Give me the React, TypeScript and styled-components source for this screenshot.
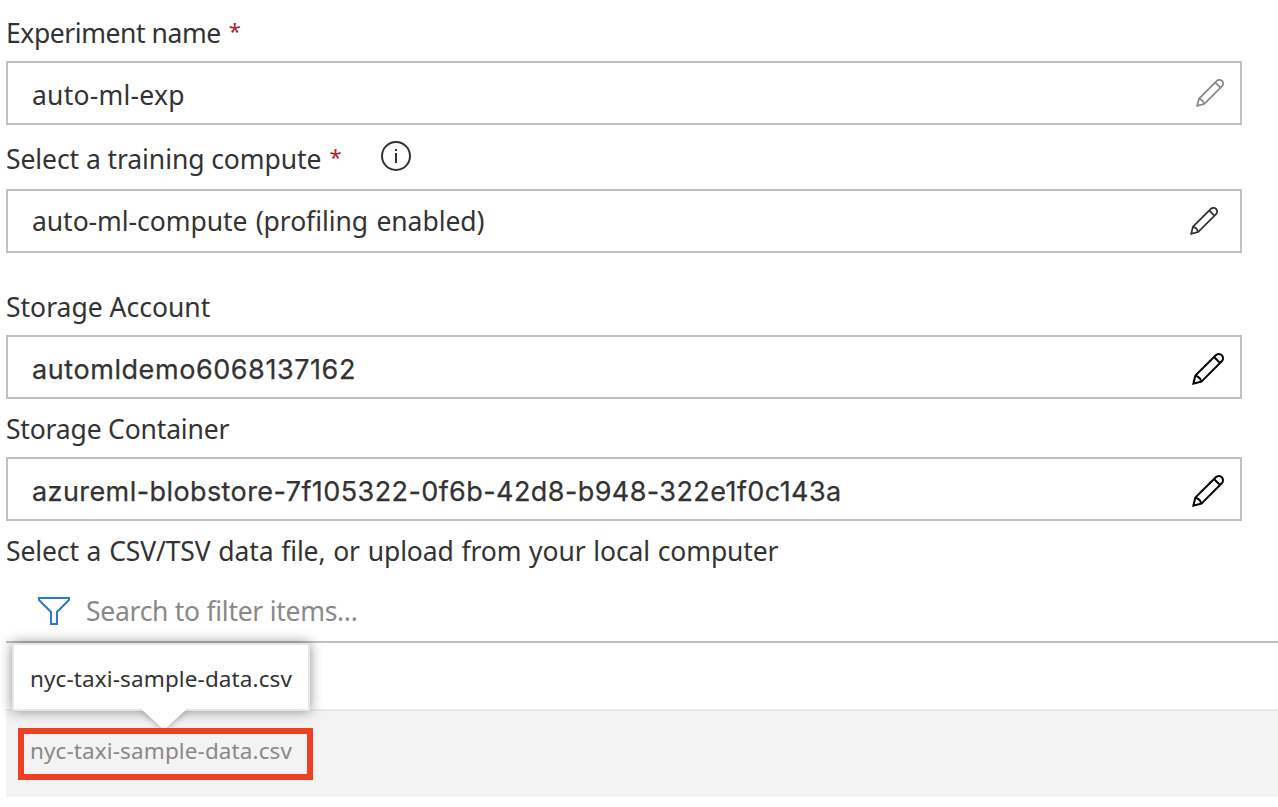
import React from 'react';
import styled, { createGlobalStyle } from 'styled-components';

const GlobalStyle = createGlobalStyle`
  * { box-sizing: border-box; }
  body {
    margin: 0;
    background: #fff;
    color: #333;
    font-family: 'Noto Sans', 'Open Sans', sans-serif;
    font-size: 26.5px;
    overflow: hidden;
  }
`;

const Page = styled.main`
  display: flex;
  flex-direction: column;
  height: 807px;
  padding-left: 6px;
`;

const Label = styled.label<{ $height: number; $drop?: number }>`
  display: flex;
  align-items: flex-end;
  height: ${p => p.$height}px;
  padding-bottom: ${p => 10 - (p.$drop ?? 0)}px;
  line-height: 36px;
  white-space: pre;
`;

const Text = styled.span<{ $spacing?: number; $word?: number; $drop?: number }>`
  padding-top: ${p => p.$drop ?? 0}px;
  letter-spacing: ${p => p.$spacing ?? 0}px;
  word-spacing: ${p => p.$word ?? 0}px;
  white-space: pre;
`;

const Required = styled.span`
  width: 12px;
  margin-left: 8px;
  padding-bottom: 3px;
  color: #a4262c;
  font-size: 22px;
`;

const InfoIcon = styled.svg`
  width: 30px;
  height: 30px;
  margin: 0 0 6px 40px;
`;

const Field = styled.div<{ $inset: number; $system?: boolean }>`
  display: flex;
  align-items: center;
  justify-content: space-between;
  width: 1236px;
  height: 64px;
  padding: 0 ${p => p.$inset}px 0 24px;
  border: 2px solid #c1c1c1;
  line-height: 36px;
  ${p => p.$system && `
    padding-top: 4px;
    font-family: Inter, sans-serif;
    font-size: 27px;
    -webkit-text-stroke: 0.25px #333;
  `}
`;

const Pencil = styled.svg<{ $size: number; $color: string }>`
  width: ${p => p.$size}px;
  height: ${p => p.$size}px;
  fill: ${p => p.$color};
`;

const Filter = styled.div`
  display: flex;
  align-items: center;
  height: 64px;
  padding: 2px 0 0 32px;
  border-bottom: 2px solid #c1c1c1;
  color: #8a8886;
  line-height: 36px;
`;

const FilterIcon = styled.svg`
  width: 32px;
  height: 28px;
  margin-right: 16px;
`;

const HeaderRow = styled.div`
  height: 68px;
  border-bottom: 2px solid #e8e8e8;
`;

const FileRow = styled.div`
  height: 86px;
  padding: 17px 0 0 12px;
  background: #f3f3f3;
`;

const Selected = styled.div`
  position: relative;
  display: flex;
  align-items: center;
  width: 295px;
  height: 52px;
  padding: 0 0 6px 6px;
  border: 6px solid #ee4023;
  color: #8a8886;
  font-size: 22.5px;
  line-height: 30px;
`;

const Tooltip = styled.div`
  position: absolute;
  left: -12px;
  bottom: 63px;
  display: flex;
  align-items: center;
  width: 298px;
  height: 68px;
  padding: 4px 0 0 16px;
  background: #fff;
  border: 2px solid #e6e6e6;
  box-shadow: 0 0 12px rgba(0, 0, 0, 0.45);
  color: #333;
`;

const Beak = styled.svg`
  position: absolute;
  left: 120px;
  top: 62px;
  width: 60px;
  height: 22px;
  overflow: visible;
  filter: drop-shadow(0 1px 3px rgba(0, 0, 0, 0.3));
  clip-path: inset(2px -8px 1px -8px);
`;

const EditIcon = ({ size, color }: { size: number; color: string }) => (
  <Pencil viewBox="0 0 2048 2048" $size={size} $color={color}>
    <path d="M2048 335q0 66-25 128t-73 110L633 1890 0 2048l158-633L1475 98q48-48 110-73t128-25q69 0 130 26t106 72 72 107 27 130zM326 1428q106 35 182 111t112 183L1701 640l-293-293L326 1428zm-150 444l329-82q-10-46-32-87t-55-73-73-54-87-33l-82 329zM1792 549q25-25 48-47t41-46 28-53 11-67q0-43-16-80t-45-66-66-45-81-16q-38 0-66 11t-53 28-47 41-47 48l293 292z" />
  </Pencil>
);

export default function App() {
  return (
    <>
      <GlobalStyle />
      <Page>
        <Label $height={61}>
          <Text $spacing={-0.43}>Experiment name</Text>
          <Required>*</Required>
        </Label>
        <Field $inset={16}>
          <Text $spacing={0.22} $drop={4}>auto-ml-exp</Text>
          <EditIcon size={28} color="#8a8886" />
        </Field>

        <Label $height={64} $drop={-2}>
          <Text $spacing={-0.08}>Select a training compute</Text>
          <Required>*</Required>
          <InfoIcon viewBox="0 0 30 30">
            <circle cx="15" cy="15" r="14" fill="none" stroke="#333" strokeWidth="2" />
            <path d="M14 8h2v2h-2zM14 12h2v10h-2z" fill="#333" />
          </InfoIcon>
        </Label>
        <Field $inset={22}>
          <Text $spacing={-0.06} $word={1.5}>auto-ml-compute (profiling enabled)</Text>
          <EditIcon size={28} color="#333" />
        </Field>

        <Label $height={82}>
          <Text>Storage Account</Text>
        </Label>
        <Field $inset={16} $system>
          <Text $spacing={0.57} $drop={2}>automldemo6068137162</Text>
          <EditIcon size={32} color="#000" />
        </Field>

        <Label $height={58}>
          <Text $spacing={-0.18}>Storage Container</Text>
        </Label>
        <Field $inset={16} $system>
          <Text $spacing={0.42} $drop={2}>azureml-blobstore-7f105322-0f6b-42d8-b948-322e1f0c143a</Text>
          <EditIcon size={32} color="#000" />
        </Field>

        <Label $height={58}>
          <Text $spacing={-0.12} $word={1}>Select a CSV/TSV data file, or upload from your local computer</Text>
        </Label>
        <Filter>
          <FilterIcon viewBox="0 0 32 28" fill="none" stroke="#2b78d4" strokeWidth="2">
            <path d="M1 1H31V3L19 15V27H13V15L1 3Z" />
          </FilterIcon>
          <Text $spacing={-0.28}>Search to filter items...</Text>
        </Filter>
        <HeaderRow />
        <FileRow>
          <Selected>
            <Text $spacing={0.11}>nyc-taxi-sample-data.csv</Text>
            <Tooltip>
              <Text $spacing={0.11}>nyc-taxi-sample-data.csv</Text>
              <Beak viewBox="0 0 60 22">
                <path d="M7 2L28 21L32 21L53 2Z" fill="#fff" />
              </Beak>
            </Tooltip>
          </Selected>
        </FileRow>
      </Page>
    </>
  );
}
